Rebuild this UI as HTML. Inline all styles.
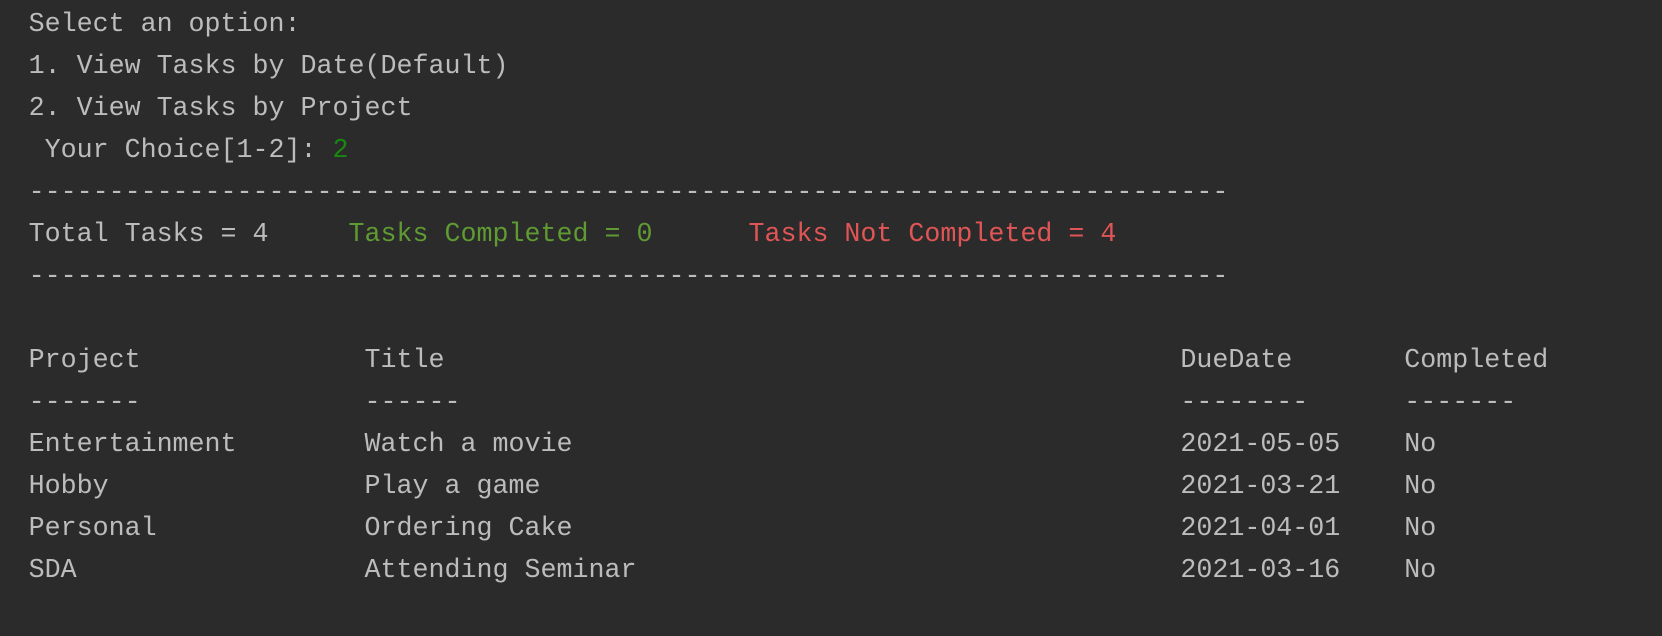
<!DOCTYPE html>
<html><head><meta charset="utf-8"><style>
html,body{margin:0;padding:0;background:#2b2b2b;width:1662px;height:636px;overflow:hidden}
pre{margin:0;position:absolute;left:28.6px;top:4px;font-family:"Liberation Mono",monospace;font-size:26.667px;line-height:42px;color:#bcbcbc}
.g2{color:#17890f}.g{color:#5f9a32}.r{color:#e05555}
</style></head><body><pre>Select an option:
1. View Tasks by Date(Default)
2. View Tasks by Project
 Your Choice[1-2]: <span class="g2">2</span>
---------------------------------------------------------------------------
Total Tasks = 4     <span class="g">Tasks Completed = 0</span>      <span class="r">Tasks Not Completed = 4</span>
---------------------------------------------------------------------------

Project              Title                                              DueDate       Completed
-------              ------                                             --------      -------
Entertainment        Watch a movie                                      2021-05-05    No
Hobby                Play a game                                        2021-03-21    No
Personal             Ordering Cake                                      2021-04-01    No
SDA                  Attending Seminar                                  2021-03-16    No</pre></body></html>
